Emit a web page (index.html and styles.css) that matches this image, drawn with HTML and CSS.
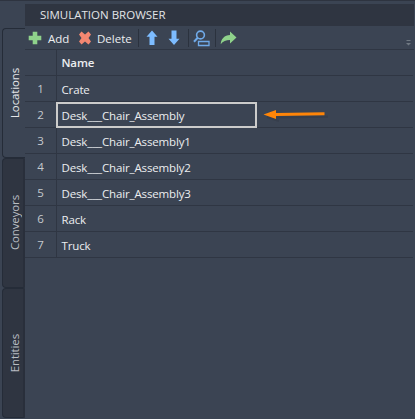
FILE: index.html
```html
<!DOCTYPE html>
<html lang="en">
<head>
<meta charset="utf-8">
<title>Simulation Browser</title>
<link rel="stylesheet" href="styles.css">
</head>
<body>
<div class="app">
  <nav class="tabs">
    <div class="tab active"><span>Locations</span></div>
    <div class="tab"><span>Conveyors</span></div>
    <div class="tab"><span>Entities</span></div>
  </nav>
  <main class="panel">
    <header class="title"><span>SIMULATION BROWSER</span></header>
    <div class="toolbar">
      <svg class="plus" width="14" height="14" viewBox="0 0 14 14"><path d="M4.700 .7h4.600v4h4v4.600h-4v4H4.700v-4h-4V4.700h4z" fill="#8fd28b"/></svg>
      <span class="add">Add</span>
      <svg class="cross" width="14" height="14" viewBox="0 0 14 14"><path d="M1 3.500L3.500 .6 7 3.400 10.500 .6 13 3.500 10.500 7 13 10.500 10.500 13.400 7 10.600 3.500 13.400 1 10.500 3.500 7z" fill="#f48771"/></svg>
      <span class="delete">Delete</span>
      <i class="sep"></i>
      <svg class="up" width="12" height="16" viewBox="0 0 12 16"><path d="M6 .5L11.500 6.800H8.500V15h-5V6.800H.5z" fill="#7dbcff"/></svg>
      <svg class="down" width="12" height="16" viewBox="0 0 12 16"><path d="M6 15L.5 8.700h3V.5h5v8.200h3z" fill="#7dbcff"/></svg>
      <i class="sep"></i>
      <svg class="find" width="17" height="17" viewBox="0 0 17 17" fill="none" stroke="#70aae8"><circle cx="7.500" cy="5" r="3.900" stroke-width="1.600"/><path d="M4.700 7.800L1 11.700" stroke-width="2"/><path d="M5.500 11.500h10.500v4H5.500z" stroke-width="1.300"/></svg>
      <i class="sep"></i>
      <svg class="share" width="17" height="14" viewBox="0 0 17 14"><path d="M10 .5L16.500 6.500 10 12.500V9C6 9 3 10.200.7 13.300 1 7.800 4.500 4.200 10 4z" fill="#8fd28b"/></svg>
      <svg class="overflow" width="5" height="7" viewBox="0 0 5 7"><path d="M.5 1.500h4M.5 4.500h4" stroke="#707983"/><path d="M1 5h3L2.500 6.500z" fill="#707983"/></svg>
    </div>
    <div class="row head"><span class="num"></span><span class="cell">Name</span></div>
    <div class="row"><span class="num">1</span><span class="cell">Crate</span></div>
    <div class="row"><span class="num">2</span><span class="cell">Desk___Chair_Assembly</span>
      <div class="selection"></div>
      <svg class="arrow" width="70" height="18" viewBox="0 0 70 18"><path d="M10 10.500L65 9.800M4 10l12 4" stroke="#343b47" stroke-opacity=".6" stroke-width="2"/><path d="M.5 7.500L13 3v2.900L61.500 5.200v3L13 8.900v3z" fill="#ff8508"/></svg>
    </div>
    <div class="row"><span class="num">3</span><span class="cell">Desk___Chair_Assembly1</span></div>
    <div class="row"><span class="num">4</span><span class="cell">Desk___Chair_Assembly2</span></div>
    <div class="row"><span class="num">5</span><span class="cell">Desk___Chair_Assembly3</span></div>
    <div class="row"><span class="num">6</span><span class="cell">Rack</span></div>
    <div class="row"><span class="num">7</span><span class="cell">Truck</span></div>
  </main>
</div>
</body>
</html>
```
FILE: styles.css
```css
* { box-sizing: border-box; }
body { margin: 0; overflow: hidden; background: #3b4453; color: #eceef0; font: 11.5px/16px "Open Sans", "Noto Sans", sans-serif; letter-spacing: -.14px; }
.app { display: flex; height: 419px; border-top: 1px solid #2e3440; }
.tabs { width: 25px; flex: none; padding: 27px 0 0 2px; }
.tab { height: 130px; border: 1px solid #252c38; border-right: 2px solid #292f3b; border-radius: 4px 0 0 4px; background: #2f3541; color: #b9bdc3; display: flex; align-items: center; justify-content: center; padding-left: 3px; }
.tab.active { background: #3b4453; border-right: 0; color: #e4e6e9; padding-left: 2px; }
.tab span { writing-mode: vertical-rl; transform: rotate(180deg); white-space: nowrap; }
.panel { flex: 1; min-width: 0; padding: 3px 1px 0 0; }
.title { height: 22px; background: #2f3541; padding: 3px 0 0 15px; color: #e2e4e7; letter-spacing: 0; }
.toolbar { height: 24px; display: flex; align-items: center; border-bottom: 1px solid #2f3643; padding: 1px 3px 0 0; }
.toolbar svg { flex: none; display: block; }
.toolbar span { flex: none; padding-top: 1px; letter-spacing: 0; }
.plus { margin-left: 3px; }
.add { width: 22px; margin: 0 8px 0 6px; }
.cross { margin-right: 5px; }
.delete { width: 35px; margin-right: 6px; }
.sep { width: 1px; height: 18px; background: #2b323e; flex: none; }
.up { margin-left: 7px; }
.down { margin: 0 8px 0 10px; }
.find { margin: 0 5px 0 4px; }
.share { margin-left: 4px; }
.overflow { margin: 8px 0 0 auto; }
.row { height: 26px; margin-right: 1px; display: flex; border-bottom: 1px solid #2f3643; position: relative; line-height: 27px; }
.num { width: 32px; flex: none; border-right: 1px solid #2f3643; text-align: center; color: #c5c9ce; font-size: 11.5px; line-height: 25px; letter-spacing: 0; }
.cell { padding-left: 4.500px; white-space: nowrap; }
.head .cell { line-height: 26px; font-weight: 600; }
.selection { position: absolute; left: 31px; top: 0; width: 201px; height: 26px; border: 2px solid #cccccb; }
.arrow { position: absolute; left: 238px; top: 5px; }
```
